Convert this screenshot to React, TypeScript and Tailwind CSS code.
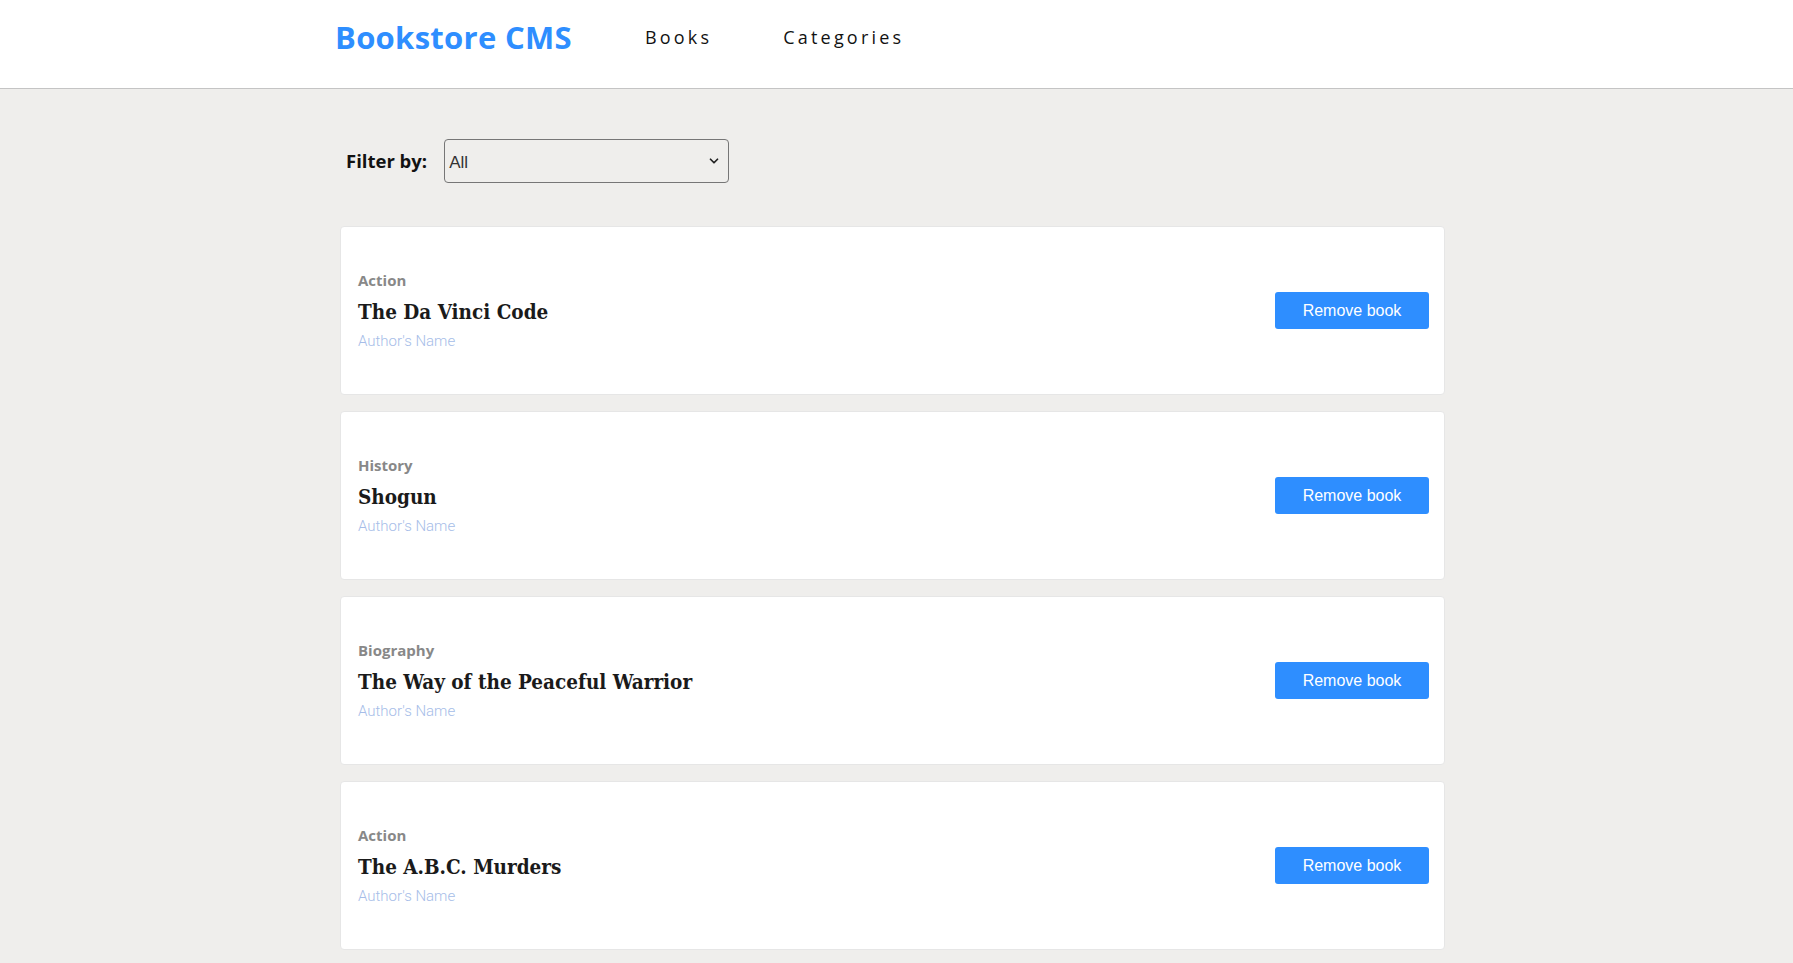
import { ChevronDown } from 'lucide-react';

const BLUE = '#2e8eff';

type Book = { id: number; category: string; title: string; author: string };

const books: Book[] = [
  { id: 1, category: 'Action', title: 'The Da Vinci Code', author: "Author's Name" },
  { id: 2, category: 'History', title: 'Shogun', author: "Author's Name" },
  { id: 3, category: 'Biography', title: 'The Way of the Peaceful Warrior', author: "Author's Name" },
  { id: 4, category: 'Action', title: 'The A.B.C. Murders', author: "Author's Name" },
];

function BookCard({ book }: { book: Book }) {
  return (
    <div className="flex h-[169px] items-center justify-between rounded-[4px] border border-[#e6e6e6] bg-white pl-[17px] pr-[15px]">
      <div className="flex flex-col pb-[2px]">
        <span className="text-[15px] leading-[30px] font-bold text-[#888888] [font-family:'Open_Sans',sans-serif]">
          {book.category}
        </span>
        <span className="pt-[2px] text-[20.5px] leading-[30px] font-bold text-[#1a1a1a] font-stretch-condensed [font-family:'DejaVu_Serif',serif]">
          {book.title}
        </span>
        <span className="text-[15px] leading-[28px] font-light text-[#a6bde8] [font-family:Roboto,sans-serif]">
          {book.author}
        </span>
      </div>
      <button
        className="h-[37px] w-[154px] rounded-[3px] text-[16px] text-white [font-family:'Liberation_Sans',Arial,sans-serif]"
        style={{ backgroundColor: BLUE }}
      >
        Remove book
      </button>
    </div>
  );
}

export default function App() {
  return (
    <div className="min-h-screen bg-[#efeeec]">
      {/* header */}
      <header className="h-[89px] border-b border-[#c4c4c4] bg-white">
        <div className="ml-[335px] flex items-center pt-[17px]">
          <h1 className="text-[31px] leading-[40px] font-bold tracking-[0.3px] text-[#2e8eff] [font-family:'Open_Sans',sans-serif]">
            Bookstore CMS
          </h1>
          <nav className="ml-[73px] flex gap-[71px] text-[18px] tracking-[3.2px] text-[#121212] [font-family:'Open_Sans',sans-serif]">
            <a>Books</a>
            <a>Categories</a>
          </nav>
        </div>
      </header>

      <main className="ml-[340px] w-[1105px] pt-[50px] pb-[14px]">
        <div className="ml-[6px] flex items-center gap-[17px]">
          <label className="text-[18.5px] font-bold text-[#121212] [font-family:'Open_Sans',sans-serif]">Filter by:</label>
          <div className="relative h-[44px] w-[285px] rounded-[4px] border border-[#767676]">
            <span className="absolute left-[4px] top-[10px] text-[17px] text-[#333] [font-family:'Liberation_Sans',Arial,sans-serif]">All</span>
            <ChevronDown size={14} strokeWidth={3} className="absolute right-[7px] top-[14px] text-[#222]" />
          </div>
        </div>

        <div className="mt-[43px] flex flex-col gap-[16px]">
          {books.map((b) => (
            <BookCard key={b.id} book={b} />
          ))}
        </div>
      </main>
    </div>
  );
}
